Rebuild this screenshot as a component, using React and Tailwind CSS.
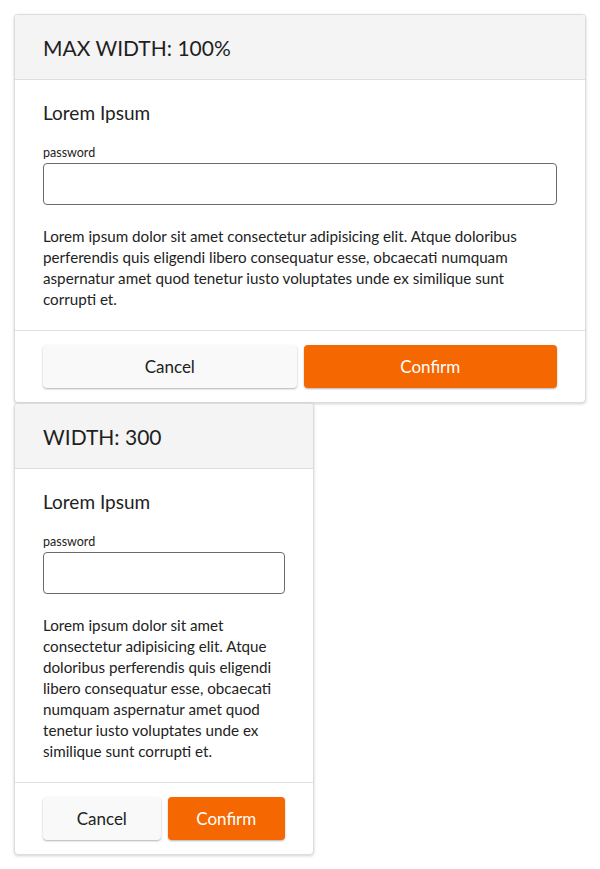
import React from "react";

const text =
  "Lorem ipsum dolor sit amet consectetur adipisicing elit. Atque doloribus perferendis quis eligendi libero consequatur esse, obcaecati numquam aspernatur amet quod tenetur iusto voluptates unde ex similique sunt corrupti et.";

function Card({ title, className }) {
  return (
    <div
      className={`bg-white border border-[#dcdcdc] rounded-[4px] shadow-[0_1px_3px_rgba(0,0,0,0.18)] overflow-hidden ${className}`}
    >
      <div className="h-[65px] bg-[#f4f4f4] border-b border-[#dedede] px-[28px] flex items-center">
        <h2 className="text-[21px] text-[#1f1f1f] leading-none pt-[1px]">{title}</h2>
      </div>
      <div className="px-[28px] pt-[20px] pb-[20px] border-b border-[#e2e2e2]">
        <h3 className="text-[19px] leading-[26px] text-[#222]">Lorem Ipsum</h3>
        <label className="block mt-[19px] text-[12.5px] leading-[16px] text-[#222]">password</label>
        <input
          type="password"
          className="block w-full h-[42px] mt-[2px] border border-[#6b6b6b] rounded-[4px] outline-none"
        />
        <p className="mt-[21px] text-[15.2px] leading-[21px] text-[#222]">{text}</p>
      </div>
      <div className="px-[28px] pt-[14px] pb-[14px] flex gap-[7px]">
        <button className="flex-1 h-[43px] rounded-[4px] bg-[#f9f9f9] text-[#222] text-[17px] shadow-[0_1px_2px_rgba(0,0,0,0.3)]">
          Cancel
        </button>
        <button className="flex-1 h-[43px] rounded-[4px] bg-[#f56700] text-white text-[17px] shadow-[0_1px_2px_rgba(0,0,0,0.3)]">
          Confirm
        </button>
      </div>
    </div>
  );
}

export default function App() {
  return (
    <div
      className="min-h-screen bg-white p-[14px] flex flex-col"
      style={{ fontFamily: "Lato, 'Noto Sans', sans-serif" }}
    >
      <Card title="MAX WIDTH: 100%" className="w-full" />
      <Card title="WIDTH: 300" className="w-[300px]" />
    </div>
  );
}
